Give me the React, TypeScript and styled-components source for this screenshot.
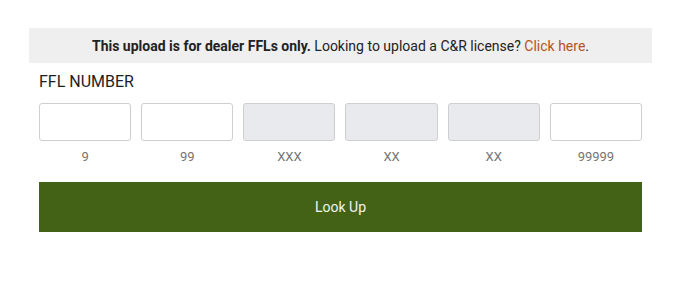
import styled, { createGlobalStyle } from 'styled-components'

const Global = createGlobalStyle`
  body { margin: 0; background: #fff; font-family: Roboto, "Liberation Sans", sans-serif; }
`

const Page = styled.div`
  padding: 28px 28px 0 29px;
  width: 623px;
`

const Banner = styled.div`
  background: #efefef;
  height: 35px;
  display: flex;
  align-items: center;
  justify-content: center;
  font-size: 14px;
  color: #222;
`

const Link = styled.a`
  color: #b8521f;
  text-decoration: none;
`

const Body = styled.div`
  padding: 0 10px;
`

const Label = styled.div`
  margin-top: 10px;
  font-size: 16px;
  font-weight: 400;
  color: #1e1e1e;
  line-height: 18px;
`

const Grid = styled.div`
  margin-top: 12px;
  display: grid;
  grid-template-columns: repeat(6, 1fr);
  column-gap: 10px;
`

const Field = styled.div`
  display: flex;
  flex-direction: column;
  align-items: center;
`

const Box = styled.input<{ $locked?: boolean }>`
  box-sizing: border-box;
  width: 100%;
  height: 38px;
  border: 1px solid #cfcfcf;
  border-radius: 3px;
  background: ${p => (p.$locked ? '#e8eaed' : '#fff')};
  outline: none;
`

const Hint = styled.div`
  margin-top: 8px;
  font-size: 13px;
  color: #747474;
  line-height: 16px;
`

const Button = styled.button`
  margin-top: 17px;
  width: 100%;
  height: 50px;
  border: none;
  background: #436215;
  color: #f2f2f2;
  font-family: Roboto, "Liberation Sans", sans-serif;
  font-size: 14px;
`

const parts = [
  { hint: '9', locked: false },
  { hint: '99', locked: false },
  { hint: 'XXX', locked: true },
  { hint: 'XX', locked: true },
  { hint: 'XX', locked: true },
  { hint: '99999', locked: false },
]

export default function App() {
  return (
    <>
      <Global />
      <Page>
        <Banner>
          <span>
            <b>This upload is for dealer FFLs only.</b> Looking to upload a C&amp;R license?{' '}
            <Link href="#">Click here</Link>.
          </span>
        </Banner>
        <Body>
          <Label>FFL NUMBER</Label>
          <Grid>
            {parts.map((p, i) => (
              <Field key={i}>
                <Box $locked={p.locked} disabled={p.locked} />
                <Hint>{p.hint}</Hint>
              </Field>
            ))}
          </Grid>
          <Button>Look Up</Button>
        </Body>
      </Page>
    </>
  )
}
